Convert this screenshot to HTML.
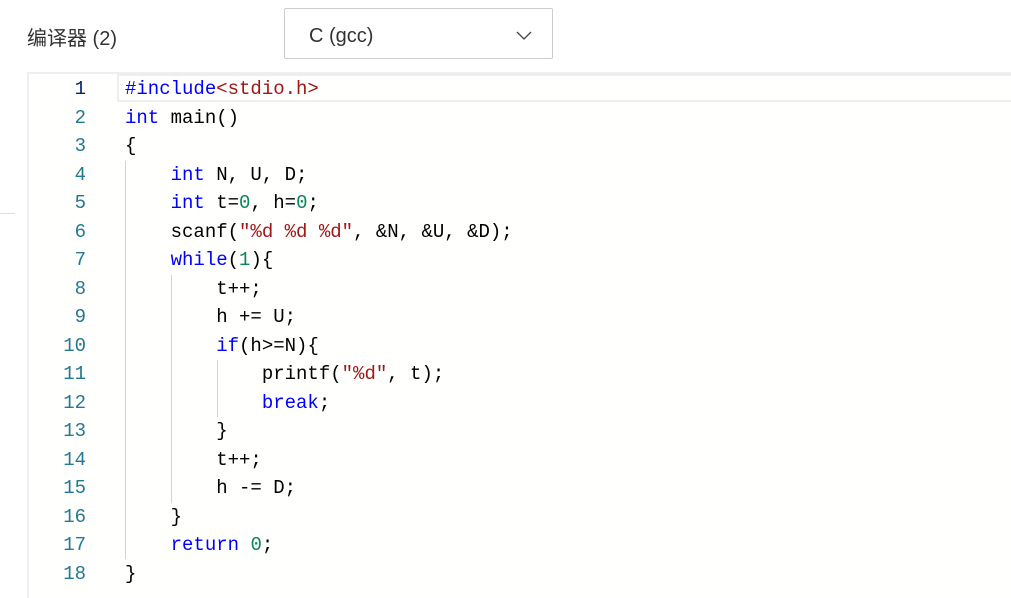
<!DOCTYPE html>
<html><head><meta charset="utf-8"><style>
body{margin:0;width:1011px;height:598px;background:#fff;overflow:hidden;position:relative;font-family:"Liberation Sans","Noto Sans CJK SC",sans-serif}
.lbl{position:absolute;left:27px;top:22px;font-size:20px;color:#333}
.sel{position:absolute;left:284px;top:8px;width:269px;height:51px;border:1px solid #ccc;border-radius:2px;box-sizing:border-box}
.sel span{position:absolute;left:24px;top:16px;font-size:20px;color:#333}
.sel svg{position:absolute;right:20px;top:22px}
.ed{position:absolute;left:27px;top:72px;width:984px;height:526px;background:#fffffe;border-top:2px solid #eee;border-left:2px solid #eee;box-sizing:border-box}
.hl{position:absolute;left:117px;top:74px;width:894px;height:28px;border:2px solid #eee;border-right:none;box-sizing:border-box}
.code{position:absolute;left:0;top:75px;font-family:"Liberation Mono",monospace;font-size:19px;line-height:28.5px}
.ln{position:absolute;left:40px;width:46px;text-align:right;color:#237893}
.tx{position:absolute;left:125px;color:#000;white-space:pre}
.k{color:#0000ff}.s{color:#a31515}.n{color:#098658}
.g{position:absolute;width:1px;background:#d3d3d3}
.hr{position:absolute;left:0;top:213px;width:15px;height:1px;background:#ddd}
</style></head><body>
<div class="lbl">编译器 (2)</div>
<div class="sel"><span>C (gcc)</span><svg width="16" height="10" viewBox="0 0 16 10"><path d="M1 1L8 8L15 1" fill="none" stroke="#444" stroke-width="1.3"/></svg></div>
<div class="hr"></div>
<div class="ed"></div>
<div class="hl"></div>
<div class="g" style="left:125px;top:161px;height:398px"></div>
<div class="g" style="left:171px;top:275px;height:228px"></div>
<div class="g" style="left:217px;top:360px;height:57px"></div>
<div class="code"><div class="ln" style="top:0"><span style="color:#0b216f">1</span><br>2<br>3<br>4<br>5<br>6<br>7<br>8<br>9<br>10<br>11<br>12<br>13<br>14<br>15<br>16<br>17<br>18</div><div class="tx"><span class="k">#include</span><span class="s">&lt;stdio.h&gt;</span>
<span class="k">int</span> main()
{
    <span class="k">int</span> N, U, D;
    <span class="k">int</span> t=<span class="n">0</span>, h=<span class="n">0</span>;
    scanf(<span class="s">"%d %d %d"</span>, &amp;N, &amp;U, &amp;D);
    <span class="k">while</span>(<span class="n">1</span>){
        t++;
        h += U;
        <span class="k">if</span>(h&gt;=N){
            printf(<span class="s">"%d"</span>, t);
            <span class="k">break</span>;
        }
        t++;
        h -= D;
    }
    <span class="k">return</span> <span class="n">0</span>;
}</div></div>
</body></html>
